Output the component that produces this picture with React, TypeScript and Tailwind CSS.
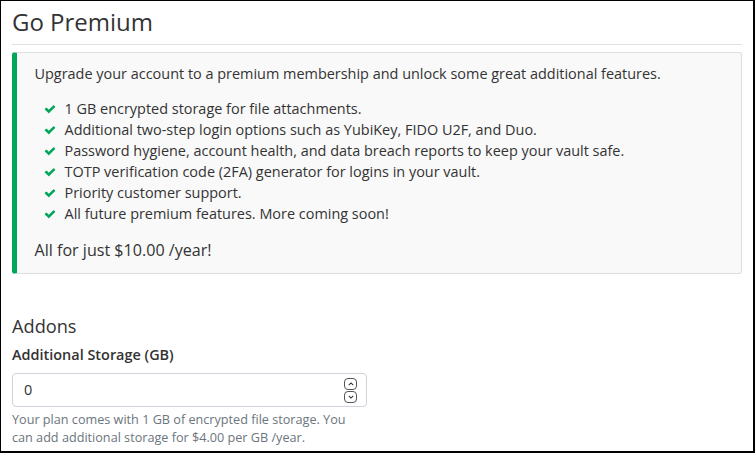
import React from 'react';

const features = [
  '1 GB encrypted storage for file attachments.',
  'Additional two-step login options such as YubiKey, FIDO U2F, and Duo.',
  'Password hygiene, account health, and data breach reports to keep your vault safe.',
  'TOTP verification code (2FA) generator for logins in your vault.',
  'Priority customer support.',
  'All future premium features. More coming soon!',
];

function Check() {
  return (
    <svg viewBox="0 0 1792 1792" className="w-[12px] h-[12px] text-[#00a65a]" fill="currentColor">
      <path d="M1671 566q0 40-28 68l-724 724-136 136q-28 28-68 28t-68-28l-136-136-362-362q-28-28-28-68t28-68l136-136q28-28 68-28t68 28l294 295 656-657q28-28 68-28t68 28l136 136q28 28 28 68z" />
    </svg>
  );
}

function Spinner() {
  return (
    <div className="flex flex-col items-center gap-[1px]">
      <div className="w-[13px] h-[12px] rounded-[4px] border border-[#555] flex items-center justify-center">
        <svg viewBox="0 0 8 5" className="w-[6px] h-[4px]" fill="none" stroke="#333" strokeWidth="1.4">
          <path d="M1 4 L4 1 L7 4" />
        </svg>
      </div>
      <div className="w-[13px] h-[12px] rounded-[4px] border border-[#555] flex items-center justify-center">
        <svg viewBox="0 0 8 5" className="w-[6px] h-[4px]" fill="none" stroke="#333" strokeWidth="1.4">
          <path d="M1 1 L4 4 L7 1" />
        </svg>
      </div>
    </div>
  );
}

export default function App() {
  return (
    <div
      className="w-[755px] h-[453px] overflow-hidden bg-white border-t border-l border-r-2 border-b-2 border-black text-[#333333]"
      style={{ fontFamily: '"Open Sans", "Liberation Sans", sans-serif' }}
    >
      <div className="px-[11px]">
        {/* Header */}
        <div className="pt-[7px] pb-[8px] border-b border-[#dee2e6] mb-[7px]">
          <h1 className="text-[24px] leading-[28px] font-normal">Go Premium</h1>
        </div>

        {/* Callout */}
        <div className="bg-[#f9f9f9] border border-[#dedede] border-l-[5px] border-l-[#00a65a] rounded-[3px] px-[17.5px] pt-[10px] pb-[11px]">
          <p className="text-[14.45px] leading-[21px] mb-[14px]">
            Upgrade your account to a premium membership and unlock some great additional features.
          </p>
          <ul className="mb-[14px]">
            {features.map((f) => (
              <li key={f} className="flex items-center text-[14.45px] leading-[21px]">
                <span className="w-[30px] flex justify-end pr-[9px]">
                  <Check />
                </span>
                <span>{f}</span>
              </li>
            ))}
          </ul>
          <p className="text-[16.1px] leading-[24px]">All for just $10.00 /year!</p>
        </div>

        {/* Addons */}
        <h2 className="mt-[41px] text-[18.2px] leading-[22px] font-normal mb-[7px]">Addons</h2>
        <label className="block text-[14.45px] leading-[21px] font-semibold mb-[8px]">Additional Storage (GB)</label>
        <div className="w-[355px] h-[34px] border border-[#ced4da] rounded-[4px] flex items-center pl-[11px] pr-[9px]">
          <span className="flex-1 text-[14.45px]">0</span>
          <Spinner />
        </div>
        <p className="w-[350px] mt-[4px] text-[12.65px] leading-[17.5px] text-[#6c757d]">
          Your plan comes with 1 GB of encrypted file storage. You can add additional storage for $4.00 per GB /year.
        </p>
      </div>
    </div>
  );
}
